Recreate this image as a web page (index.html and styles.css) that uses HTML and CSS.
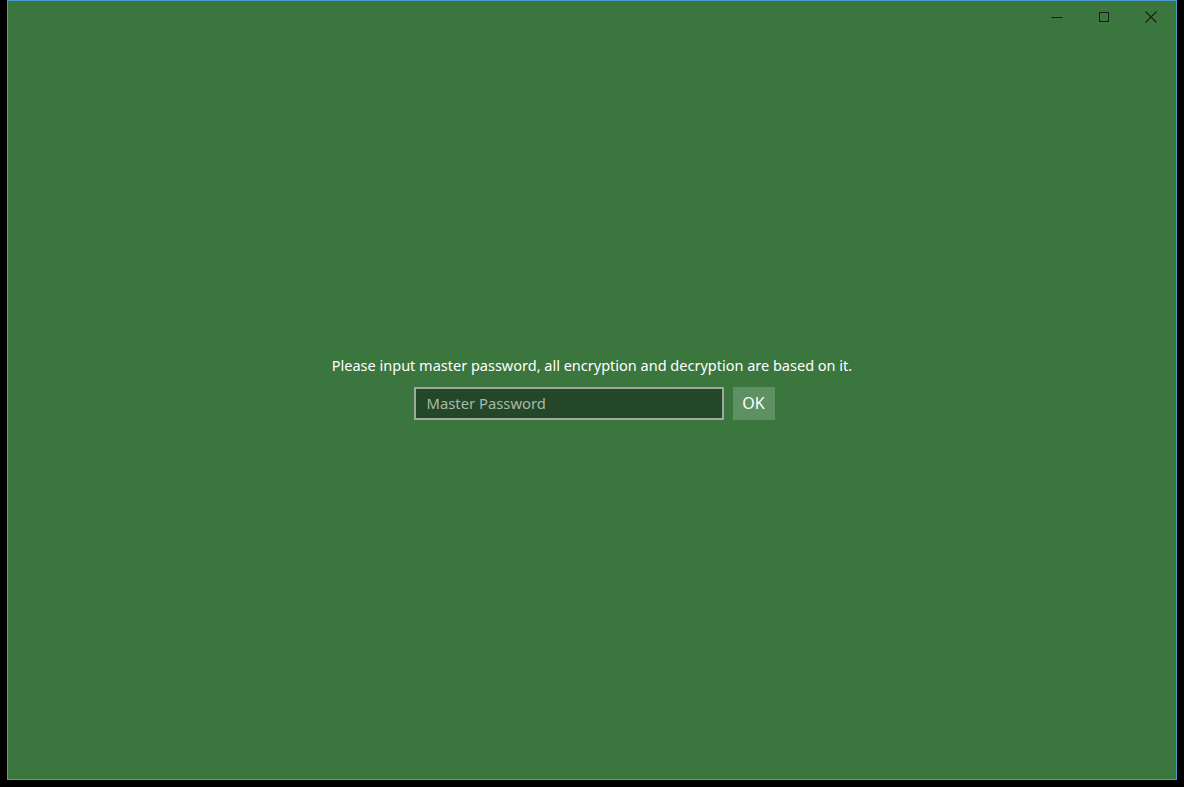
FILE: index.html
```html
<!DOCTYPE html>
<html lang="en">
<head>
    <meta charset="UTF-8">
    <meta name="viewport" content="width=device-width, initial-scale=1.0">
    <title>Master Password</title>
    <link rel="stylesheet" href="styles.css">
</head>
<body>
    <div class="window">
        <div class="caption-buttons">
            <div class="caption-btn">
                <svg width="12" height="12" viewBox="0 0 12 12"><path d="M0.5 6.5h11" stroke="#1b1b1b" stroke-width="1"/></svg>
            </div>
            <div class="caption-btn">
                <svg width="12" height="12" viewBox="0 0 12 12"><rect x="1.5" y="1.5" width="9" height="9" fill="none" stroke="#1b1b1b" stroke-width="1"/></svg>
            </div>
            <div class="caption-btn">
                <svg width="12" height="12" viewBox="0 0 12 12"><path d="M0.5 0.5l11 11M11.5 0.5l-11 11" stroke="#1b1b1b" stroke-width="1.1"/></svg>
            </div>
        </div>
        <div class="login">
            <div class="prompt">Please input master password, all encryption and decryption are based on it.</div>
            <div class="login-row">
                <input class="password" type="password" placeholder="Master Password">
                <button class="ok-btn">OK</button>
            </div>
        </div>
    </div>
</body>
</html>
```

FILE: styles.css
```css
body, html {
    height: 100%;
    margin: 0;
    overflow: hidden;
    background-color: #000;
    font-family: "Noto Sans", "Open Sans", sans-serif;
}
.window {
    position: relative;
    box-sizing: border-box;
    width: 1170px;
    height: 780px;
    margin-left: 7px;
    background-color: #3a763d;
    border: 1px solid #4c9ac8;
    display: flex;
    flex-direction: column;
}
.caption-buttons {
    display: flex;
    justify-content: flex-end;
    height: 32px;
    padding-right: 2px;
}
.caption-btn {
    width: 47px;
    height: 32px;
    display: flex;
    align-items: center;
    justify-content: center;
}
.login {
    flex: 1;
    display: flex;
    flex-direction: column;
    align-items: center;
    justify-content: center;
    padding-bottom: 38px;
}
.prompt {
    color: #fff;
    font-size: 14.5px;
    line-height: 20px;
    margin-bottom: 12px;
}
.login-row {
    display: flex;
    gap: 9px;
    padding-left: 4px;
}
.password {
    box-sizing: border-box;
    width: 310px;
    height: 33px;
    padding: 0 11px;
    background-color: #24472a;
    border: 2px solid #9fa99f;
    color: #fff;
    font-family: inherit;
    font-size: 14.8px;
    outline: none;
}
.password::placeholder {
    color: #a9b9a9;
}
.ok-btn {
    width: 42px;
    height: 33px;
    padding: 0;
    border: none;
    background-color: #5e9161;
    color: #fff;
    font-family: inherit;
    font-size: 16px;
}
```
